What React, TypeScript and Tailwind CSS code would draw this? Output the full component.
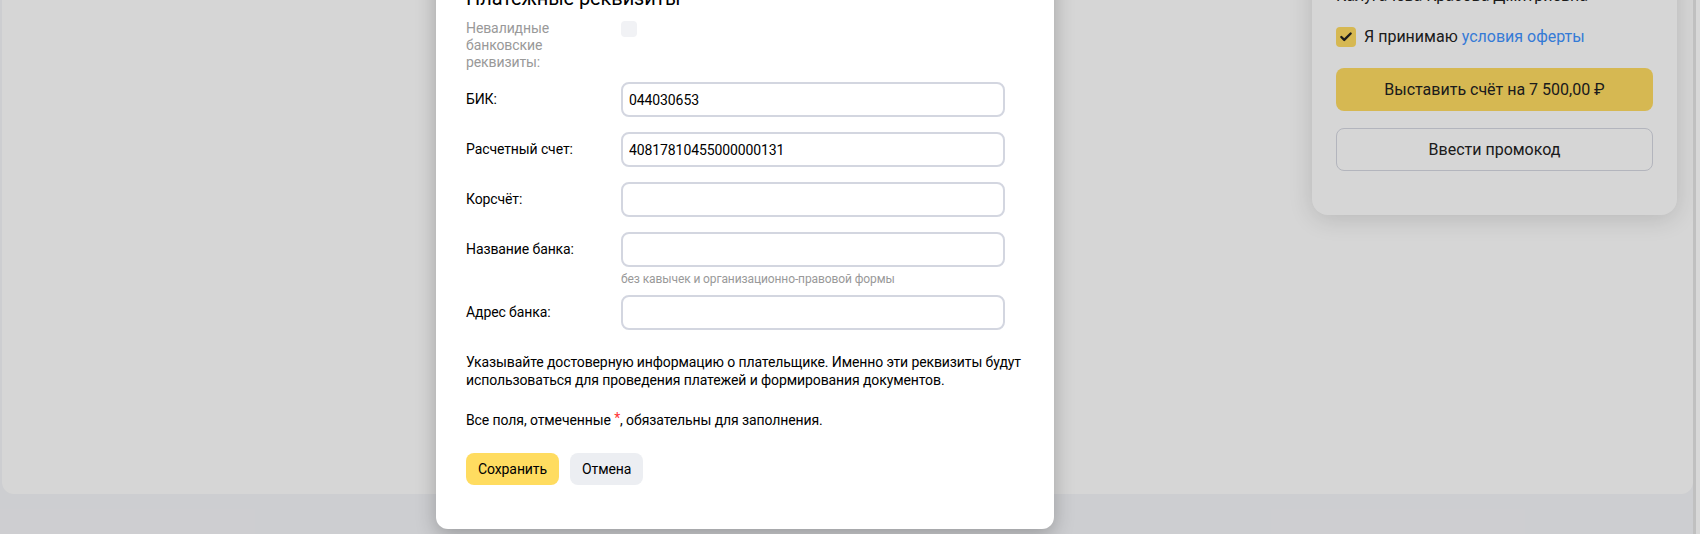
import { Check } from "lucide-react";

const font = { fontFamily: "Roboto, 'Noto Sans', Arial, sans-serif" };

function Field({ label, value, hint }: { label: string; value?: string; hint?: string }) {
  return (
    <div className="grid grid-cols-[135px_384px] gap-x-[20px] items-start">
      <div className="text-[14px] leading-[35px] text-black">{label}</div>
      <div>
        <input
          readOnly
          value={value ?? ""}
          className="w-full h-[35px] rounded-[8px] border-2 border-[#d3d6e0] bg-white pl-[6px] text-[14px] text-black outline-none tracking-[-0.1px]"
        />
        {hint && <div className="mt-[5px] text-[12px] leading-[14px] text-[#999]">{hint}</div>}
      </div>
    </div>
  );
}

export default function App() {
  return (
    <div style={font} className="relative h-[534px] w-[1700px] overflow-hidden bg-[#f5f6f9] flex">
      <div className="w-[1693px] pl-[2px]">
        <div className="h-[494px] bg-white rounded-b-[12px] flex justify-end items-start pr-[16px]">
          <div className="-mt-[39px] w-[365px] rounded-[16px] bg-white shadow-[0_4px_24px_rgba(0,0,0,0.14)] px-[24px] pt-[24px] pb-[44px]">
            <div className="text-[16px] leading-[22px] text-[#222]">Калугачёва Красова Дмитриевна</div>
            <div className="mt-[19px] flex items-center gap-[8px] h-[22px]">
              <div className="w-[20px] h-[20px] rounded-[4px] bg-[#ffdc62] flex items-center justify-center">
                <Check className="w-[14px] h-[14px] text-[#222]" strokeWidth={4} />
              </div>
              <span className="text-[16px] text-[#222]">
                Я принимаю <span className="text-[#3f93ff]">условия оферты</span>
              </span>
            </div>
            <button className="mt-[20px] w-full h-[43px] rounded-[8px] bg-[#ffdc62] text-[16px] text-[#222]">
              Выставить счёт на 7 500,00 ₽
            </button>
            <button className="mt-[17px] w-full h-[43px] rounded-[8px] border border-[#d6d8e2] bg-white text-[16px] text-[#222]">
              Ввести промокод
            </button>
          </div>
        </div>
      </div>
      <div className="w-[7px] flex">
        <div className="w-[3px] bg-[#c0c0c0]" />
        <div className="flex-1 bg-[#d8d8d8]" />
      </div>

      <div className="absolute inset-y-0 left-0 w-[1693px] bg-[rgba(0,0,0,0.16)]" />

      <div className="absolute left-[436px] top-[-38px] w-[618px] rounded-[12px] bg-white shadow-[0_6px_20px_rgba(0,0,0,0.25)] pl-[30px] pr-[24px] pt-[24px] pb-[44px] tracking-[-0.1px]">
        <div className="text-[20px] leading-[24px] text-black">Платежные реквизиты</div>
        <div className="mt-[10px] grid grid-cols-[135px_384px] gap-x-[20px] items-start">
          <div className="text-[14px] leading-[17px] text-[#999]">Невалидные банковские реквизиты:</div>
          <div className="mt-[1px] w-[16px] h-[16px] rounded-[4px] bg-[#f1f2f5]" />
        </div>
        <div className="mt-[11px] flex flex-col gap-[15px]">
          <Field label="БИК:" value="044030653" />
          <Field label="Расчетный счет:" value="40817810455000000131" />
          <Field label="Корсчёт:" />
          <div>
            <Field label="Название банка:" hint="без кавычек и организационно-правовой формы" />
            <div className="mt-[9px]">
              <Field label="Адрес банка:" />
            </div>
          </div>
        </div>
        <p className="mt-[23px] text-[14px] leading-[18px] text-black">
          Указывайте достоверную информацию о плательщике. Именно эти реквизиты будут использоваться для проведения
          платежей и формирования документов.
        </p>
        <p className="mt-[22px] text-[14px] leading-[18px] text-black">
          Все поля, отмеченные <span className="text-[#f33] relative -top-[2px]">*</span>, обязательны для заполнения.
        </p>
        <div className="mt-[24px] flex gap-[11px]">
          <button className="h-[32px] px-[12px] rounded-[8px] bg-[#ffdc60] text-[14px] text-black">Сохранить</button>
          <button className="h-[32px] px-[12px] rounded-[8px] bg-[#eceef2] text-[14px] text-black">Отмена</button>
        </div>
      </div>
    </div>
  );
}
